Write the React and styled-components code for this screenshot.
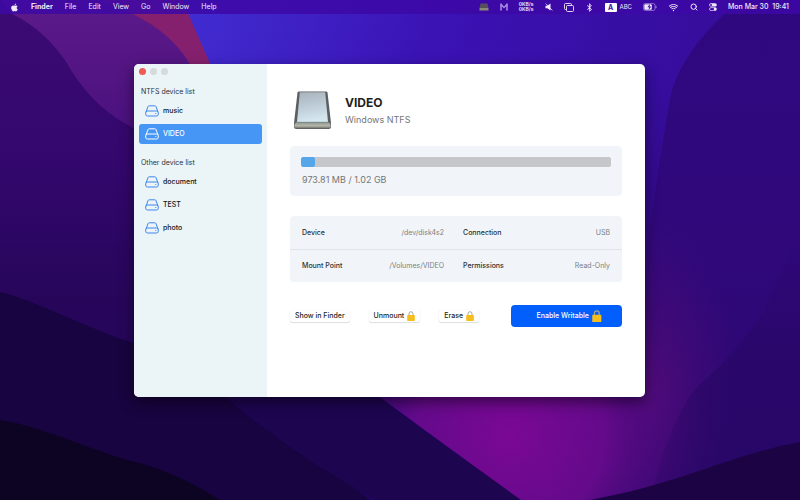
import React from 'react';
import styled, { createGlobalStyle } from 'styled-components';
import { FaApple, FaBluetoothB } from 'react-icons/fa';
import { IoWifi } from 'react-icons/io5';
import { Search } from 'lucide-react';

const GlobalStyle = createGlobalStyle`
  * {
    box-sizing: border-box;
  }

  body {
    margin: 0;
    font-family: Inter, "Liberation Sans", sans-serif;
    font-size: 7px;
    line-height: 12px;
    color: #1d1f22;
    background: #1a0645;
  }

  button {
    font: inherit;
    border: none;
    margin: 0;
    padding: 0;
    background: none;
    color: inherit;
  }

  svg {
    display: block;
    flex-shrink: 0;
  }
`;

const Desktop = styled.div`
  position: relative;
  min-height: 100vh;
  display: flex;
  flex-direction: column;
`;

const WallpaperSvg = styled.svg`
  position: absolute;
  inset: 0;
  width: 100%;
  height: 100%;
`;

const MenuBar = styled.header`
  position: relative;
  height: 14px;
  padding: 0 11px 0 10px;
  display: flex;
  align-items: center;
  justify-content: space-between;
  color: #efe9fb;
  background: rgba(60, 8, 165, 0.86);
`;

const Menus = styled.nav`
  display: flex;
  align-items: center;
  gap: 12px;
`;

const MenuItem = styled.button`
  font-weight: ${props => (props.$bold ? 700 : 400)};
`;

const StatusItems = styled.div`
  display: flex;
  align-items: center;
  gap: 11px;
`;

const InputSource = styled.div`
  display: flex;
  align-items: center;
  gap: 3px;
  font-size: 6px;

  b {
    width: 12px;
    height: 9px;
    line-height: 9px;
    font-size: 7px;
    text-align: center;
    border-radius: 1px;
    color: #3a0aa5;
    background: #fff;
  }
`;

const NetSpeed = styled.div`
  font-size: 5px;
  line-height: 5px;
  font-weight: 600;
`;

const Clock = styled.time`
  font-weight: 500;
  white-space: pre;
`;

const Stage = styled.main`
  position: relative;
  flex: 1;
  display: flex;
  padding: 50px 155px 103px 134px;
`;

const Window = styled.section`
  flex: 1;
  display: flex;
  border-radius: 5px;
  overflow: hidden;
  background: #fff;
  box-shadow: 0 5px 14px rgba(0, 0, 0, 0.5);
`;

const Sidebar = styled.aside`
  width: 133px;
  padding: 4px 5px;
  background: #ebf4f6;
`;

const TrafficLights = styled.div`
  display: flex;
  gap: 4px;
  height: 18px;
`;

const Light = styled.button`
  width: 7px;
  height: 7px;
  border-radius: 50%;
  background: ${props => props.$color};
`;

const DeviceSection = styled.section`
  & + & {
    margin-top: 13px;
  }
`;

const SectionTitle = styled.h2`
  margin: 0 2px 3px;
  font-size: 7px;
  line-height: 12px;
  font-weight: 400;
  color: #2c3236;
`;

const DeviceList = styled.div`
  display: flex;
  flex-direction: column;
  gap: 3px;
`;

const DeviceRow = styled.button`
  height: 20px;
  padding: 0 6px;
  display: flex;
  align-items: center;
  gap: 4px;
  font-weight: 500;
  border-radius: 3px;
  color: ${props => (props.$active ? '#fff' : '#111417')};
  background: ${props => (props.$active ? '#4596f5' : 'transparent')};

  svg {
    color: ${props => (props.$active ? '#fff' : '#3f86ee')};
  }
`;

const Content = styled.div`
  flex: 1;
  padding: 27px 23px 22px;
`;

const DeviceHeader = styled.header`
  display: flex;
  align-items: center;
  gap: 13px;
  padding: 0 3px;
`;

const DeviceName = styled.h1`
  margin: 0;
  font-size: 12px;
  line-height: 18px;
  font-weight: 700;
  color: #1f1f21;
`;

const FileSystem = styled.p`
  margin: 0;
  font-size: 9px;
  line-height: 16px;
  color: #737678;
`;

const UsageCard = styled.div`
  margin-top: 16px;
  padding: 11px;
  height: 50px;
  border-radius: 4px;
  background: #f1f5f9;
`;

const Track = styled.div`
  height: 10px;
  border-radius: 2px;
  overflow: hidden;
  background: #c5c7ca;
`;

const Fill = styled.div`
  height: 100%;
  border-radius: 2px;
  background: #55a7ea;
`;

const UsageText = styled.p`
  margin: 5px 0 0 1px;
  font-size: 9px;
  line-height: 16px;
  color: #737678;
`;

const InfoTable = styled.table`
  width: 100%;
  margin-top: 20px;
  border-spacing: 0;
  table-layout: fixed;
  border-radius: 4px;
  background: #f1f5f9;

  th,
  td {
    height: 33px;
    padding: 0;
  }

  th {
    padding-left: 12px;
    text-align: left;
    font-weight: 500;
    color: #2b3034;
  }

  td {
    padding-right: 12px;
    text-align: right;
    color: #7b7f83;
  }

  td + th {
    padding-left: 7px;
  }

  tr + tr > * {
    border-top: 1px solid #dfe5e8;
  }
`;

const Actions = styled.div`
  margin-top: 23px;
  display: flex;
  align-items: center;
`;

const ActionButton = styled.button`
  height: 12px;
  padding: 0 5px;
  margin-right: 19px;
  display: flex;
  align-items: center;
  gap: 3px;
  font-weight: 500;
  white-space: nowrap;
  border-radius: 2px;
  background: #fff;
  box-shadow: 0 1px 1px rgba(0, 0, 0, 0.12), 0 0 1px rgba(0, 0, 0, 0.12);
`;

const PrimaryButton = styled.button`
  width: 111px;
  height: 22px;
  margin-left: auto;
  padding-left: 5px;
  display: flex;
  align-items: center;
  justify-content: center;
  gap: 3px;
  font-weight: 500;
  border-radius: 4px;
  color: #fff;
  background: #025ffc;
`;

const Wallpaper = () => (
  <WallpaperSvg viewBox="0 0 800 500" preserveAspectRatio="xMidYMid slice" aria-hidden="true">
    <defs>
      <linearGradient id="blue" x1="0" y1="0" x2="1" y2="0.3">
        <stop offset="0" stopColor="#412ed3" />
        <stop offset="0.4" stopColor="#3b12b4" />
        <stop offset="1" stopColor="#330a90" />
      </linearGradient>
      <linearGradient id="violet" x1="0" y1="0" x2="0" y2="1">
        <stop offset="0" stopColor="#5d1a8a" />
        <stop offset="0.5" stopColor="#48107c" />
        <stop offset="1" stopColor="#2c0560" />
      </linearGradient>
      <linearGradient id="left" x1="0" y1="0" x2="0" y2="1">
        <stop offset="0" stopColor="#3c0b74" />
        <stop offset="0.35" stopColor="#32076c" />
        <stop offset="0.6" stopColor="#27065a" />
        <stop offset="1" stopColor="#20055a" />
      </linearGradient>
      <linearGradient id="right" x1="0" y1="0" x2="0" y2="1">
        <stop offset="0" stopColor="#2f0880" />
        <stop offset="0.5" stopColor="#30087e" />
        <stop offset="1" stopColor="#24065f" />
      </linearGradient>
      <linearGradient id="corner" x1="0" y1="0" x2="0" y2="1">
        <stop offset="0" stopColor="#24065f" stopOpacity="0" />
        <stop offset="0.5" stopColor="#24065f" />
        <stop offset="1" stopColor="#220660" />
      </linearGradient>
      <linearGradient id="dusk" x1="0" y1="0" x2="0" y2="1">
        <stop offset="0" stopColor="#2f0878" stopOpacity="0" />
        <stop offset="0.5" stopColor="#2f0878" stopOpacity="0.8" />
        <stop offset="1" stopColor="#2c0870" />
      </linearGradient>
      <radialGradient id="plum" gradientUnits="userSpaceOnUse" cx="650" cy="390" r="90" gradientTransform="translate(0 -390) scale(1 2)">
        <stop offset="0" stopColor="#560e7c" />
        <stop offset="1" stopColor="#400a78" stopOpacity="0" />
      </radialGradient>
      <radialGradient id="glow" gradientUnits="userSpaceOnUse" cx="510" cy="435" r="210">
        <stop offset="0" stopColor="#7a0895" />
        <stop offset="0.45" stopColor="#640a8a" />
        <stop offset="1" stopColor="#2c0668" stopOpacity="0" />
      </radialGradient>
    </defs>
    <rect width="800" height="500" fill="url(#left)" />
    <path d="M12 14Q42 28 65 60Q90 105 128 125Q160 140 200 300H260L230 120L190 0H0Z" fill="url(#violet)" />
    <path d="M100 0H190L230 100H205C190 50 165 24 100 0Z" fill="#85206e" />
    <path d="M178 0H800V500H520L380 397L260 240L230 120C212 60 198 40 183 0Z" fill="url(#blue)" />
    <path d="M740 0H800V500H600L640 300Q660 150 672 90Q686 45 740 0Z" fill="url(#right)" />
    <path d="M300 80H800V500H520L380 397Z" fill="url(#dusk)" />
    <rect x="540" y="180" width="260" height="320" fill="url(#plum)" />
    <path d="M800 230V500H650Q672 412 700 384Q735 355 765 310Z" fill="url(#corner)" opacity=".5" />
    <path d="M340 220H800V500H520L380 397Z" fill="url(#glow)" />
    <path d="M0 292C35 300 90 330 134 343L240 400L370 500H0Z" fill="#180440" />
    <path d="M200 380H356L378 397L521 500H376Q300 460 226 398Z" fill="#1d0550" />
    <path d="M0 420C50 428 100 455 140 463Q182 475 220 500H0Z" fill="#0d0424" />
    <path d="M590 500C680 484 730 455 800 442V500Z" fill="#1c0444" />
  </WallpaperSvg>
);

const DriveIcon = () => (
  <svg width="14" height="12" viewBox="0 0 14 12" fill="none" stroke="currentColor" strokeLinejoin="round">
    <path d="M1 7.2L3 1.6Q3.3 .8 4.2 .8H9.8Q10.7 .8 11 1.6L13 7.2" />
    <rect x=".7" y="6" width="12.6" height="5" rx="1.8" />
    <circle cx="10.8" cy="8.5" r=".6" fill="currentColor" stroke="none" />
  </svg>
);

const DiskImage = () => (
  <svg width="39" height="39" viewBox="0 0 39 39">
    <defs>
      <linearGradient id="face" x1="0" y1="0" x2="0.2" y2="1">
        <stop offset="0" stopColor="#a9b2ba" />
        <stop offset="0.5" stopColor="#bccbd6" />
        <stop offset="1" stopColor="#d5e6ee" />
      </linearGradient>
      <linearGradient id="base" x1="0" y1="0" x2="0" y2="1">
        <stop offset="0" stopColor="#8e948f" />
        <stop offset="0.6" stopColor="#b5b6ab" />
        <stop offset="1" stopColor="#66665f" />
      </linearGradient>
    </defs>
    <path d="M4.5 1.5Q4.8 .5 6 .5H33Q34.2 .5 34.5 1.5L38 32V35.5Q38 38 35.5 38H3.5Q1 38 1 35.5V32Z" fill="#5a5f63" />
    <path d="M6.8 1.3H32.2L35 31H4Z" fill="url(#face)" />
    <path d="M1.5 33L3.5 31H35.5L37.5 33V35.3Q37.5 37.5 35.3 37.5H3.7Q1.5 37.5 1.5 35.3Z" fill="url(#base)" />
    <path d="M3.5 31.3H35.5" stroke="#6e8580" strokeWidth=".8" />
  </svg>
);

const LockIcon = ({ size = 10 }) => (
  <svg width={size * 0.8} height={size} viewBox="0 0 8 10">
    <path d="M2 5V2.8Q2 .7 4 .7T6 2.8V5" fill="none" stroke="#a5a58f" strokeWidth="1" />
    <rect x=".2" y="4" width="7.6" height="6" rx=".7" fill="#f7bd1c" />
  </svg>
);

const TrayDriveIcon = () => (
  <svg width="10" height="8" viewBox="0 0 10 8">
    <path d="M1.5 .5H8.5L9.5 5H.5Z" fill="#55505c" />
    <rect x=".5" y="5" width="9" height="2.5" rx=".6" fill="#8d8978" />
  </svg>
);

const MonitorIcon = () => (
  <svg width="8" height="8" viewBox="0 0 8 8" fill="none" stroke="#b59aec">
    <path d="M1 .5V7.5M7 .5V7.5" strokeWidth="1.4" />
    <path d="M1 1.5L4 4.5L7 1.5" strokeWidth="1.2" />
  </svg>
);

const MuteIcon = () => (
  <svg width="8" height="8" viewBox="0 0 8 8">
    <path d="M.5 2.8H2.3L5.5 .5V7.5L2.3 5.2H.5Z" fill="currentColor" />
    <path d="M.8 .6L7.4 7.4" stroke="currentColor" strokeWidth=".8" />
  </svg>
);

const WindowsIcon = () => (
  <svg width="10" height="9" viewBox="0 0 10 9" fill="none" stroke="currentColor" strokeWidth=".9">
    <path d="M2.5 6.5H1.5Q.5 6.5 .5 5.5V1.5Q.5 .5 1.5 .5H6.5Q7.5 .5 7.5 1.5V2.5" />
    <rect x="2.5" y="2.5" width="7" height="6" rx="1" />
  </svg>
);

const BatteryIcon = () => (
  <svg width="14" height="8" viewBox="0 0 14 8">
    <rect x=".5" y=".5" width="11.5" height="7" rx="1.8" fill="none" stroke="currentColor" strokeWidth=".6" opacity=".7" />
    <rect x="1.3" y="1.3" width="7.5" height="5.4" rx="1" fill="currentColor" />
    <path d="M7 .8L4.5 4.3H6.2L5.5 7.2L8.3 3.6H6.5Z" fill="#3a0aa5" />
    <path d="M13 2.8V5.2" stroke="currentColor" strokeWidth=".8" opacity=".7" />
  </svg>
);

const ControlCenterIcon = () => (
  <svg width="8" height="8" viewBox="0 0 8 8">
    <rect x=".2" y=".2" width="7.6" height="3.4" rx="1.7" fill="currentColor" />
    <circle cx="2" cy="1.9" r="1" fill="#3a0aa5" />
    <rect x=".5" y="4.6" width="7" height="3" rx="1.5" fill="none" stroke="currentColor" strokeWidth=".7" />
    <circle cx="6" cy="6.1" r="1.3" fill="currentColor" />
  </svg>
);

const menus = ['File', 'Edit', 'View', 'Go', 'Window', 'Help'];

const sections = [
  { title: 'NTFS device list', devices: ['music', 'VIDEO'] },
  { title: 'Other device list', devices: ['document', 'TEST', 'photo'] },
];

const usedPercent = 4.5;

const App = () => {
  return (
    <Desktop>
      <GlobalStyle />
      <Wallpaper />
      <MenuBar>
        <Menus>
          <FaApple size={9} />
          <MenuItem $bold>Finder</MenuItem>
          {menus.map(menu => <MenuItem key={menu}>{menu}</MenuItem>)}
        </Menus>
        <StatusItems>
          <TrayDriveIcon />
          <MonitorIcon />
          <NetSpeed>0KB/s<br />0KB/s</NetSpeed>
          <MuteIcon />
          <WindowsIcon />
          <FaBluetoothB size={9} />
          <InputSource><b>A</b>ABC</InputSource>
          <BatteryIcon />
          <IoWifi size={11} />
          <Search size={8} strokeWidth={3} />
          <ControlCenterIcon />
          <Clock>Mon Mar 30  19:41</Clock>
        </StatusItems>
      </MenuBar>
      <Stage>
        <Window>
          <Sidebar>
            <TrafficLights>
              <Light $color="#ee5b55" aria-label="Close" />
              <Light $color="#d5dadb" aria-label="Minimize" />
              <Light $color="#d5dadb" aria-label="Zoom" />
            </TrafficLights>
            {sections.map(section => (
              <DeviceSection key={section.title}>
                <SectionTitle>{section.title}</SectionTitle>
                <DeviceList>
                  {section.devices.map(device => (
                    <DeviceRow key={device} $active={device === 'VIDEO'}>
                      <DriveIcon />
                      {device}
                    </DeviceRow>
                  ))}
                </DeviceList>
              </DeviceSection>
            ))}
          </Sidebar>
          <Content>
            <DeviceHeader>
              <DiskImage />
              <div>
                <DeviceName>VIDEO</DeviceName>
                <FileSystem>Windows NTFS</FileSystem>
              </div>
            </DeviceHeader>
            <UsageCard>
              <Track role="progressbar" aria-valuenow={usedPercent} aria-label="Used space">
                <Fill style={{ width: `${usedPercent}%` }} />
              </Track>
              <UsageText>973.81 MB / 1.02 GB</UsageText>
            </UsageCard>
            <InfoTable>
              <tbody>
                <tr>
                  <th scope="row">Device</th>
                  <td>/dev/disk4s2</td>
                  <th scope="row">Connection</th>
                  <td>USB</td>
                </tr>
                <tr>
                  <th scope="row">Mount Point</th>
                  <td>/Volumes/VIDEO</td>
                  <th scope="row">Permissions</th>
                  <td>Read-Only</td>
                </tr>
              </tbody>
            </InfoTable>
            <Actions>
              <ActionButton>Show in Finder</ActionButton>
              <ActionButton>Unmount <LockIcon /></ActionButton>
              <ActionButton>Erase <LockIcon /></ActionButton>
              <PrimaryButton>Enable Writable <LockIcon size={12} /></PrimaryButton>
            </Actions>
          </Content>
        </Window>
      </Stage>
    </Desktop>
  );
}

export default App;
